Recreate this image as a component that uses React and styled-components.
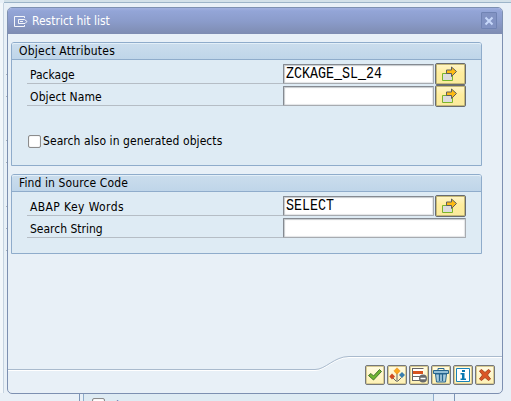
import React from "react";
import styled, { createGlobalStyle } from "styled-components";

const Global = createGlobalStyle`
  *, *::before, *::after { box-sizing: border-box; }
  body { margin: 0; overflow: hidden; }
`;

const Screen = styled.div`
  position: relative;
  width: 511px;
  height: 401px;
  overflow: hidden;
  background: #e8f0f7;
  font: 12px/16px "DejaVu Sans Condensed", "DejaVu Sans", sans-serif;
  font-stretch: condensed;
  color: #000;
`;

const Backdrop = styled.div`
  height: 100%;
  display: grid;
  grid-template: 3px 1fr 8px / 100%;
`;

const BackdropBar = styled.div`
  background: #d3e1e9;
  border-bottom: 1px solid #9cb4c8;
  margin-left: 4px;
`;

const Rail = styled.div`
  width: 7px;
  border-left: 3px solid #f2f7fb;
  box-shadow: inset 1px 0 #c5d3e0;
  padding: 71px 0 0 3px;
`;

const Tick = styled.div`
  width: 2px;
  height: 1px;
  margin-bottom: ${(p) => p.$gap}px;
  background: #a9b3bc;
`;

const BackdropPanes = styled.div`
  display: grid;
  grid-template-columns: 80px 3px 351px 21px 1fr;
`;

const Pane = styled.div`
  background: ${(p) => (p.$inner ? "#deebf3" : "#e8f0f7")};
  border-right: 1px solid ${(p) => p.$edge || "transparent"};
  border-left: 1px solid ${(p) => p.$start || "transparent"};
  display: flex;
  gap: 1px;
  padding: 5px 0 0 8px;
  overflow: hidden;
  color: #5c6fa7;
`;

const Dialog = styled.section`
  position: absolute;
  left: 7px;
  top: 7px;
  width: 496px;
  height: 387px;
  display: flex;
  flex-direction: column;
  border: 1px solid #7d90b1;
  border-radius: 5px;
  background: #e8f0f7;
  overflow: hidden;
`;

const TitleBar = styled.header`
  flex: 0 0 26px;
  display: flex;
  align-items: center;
  padding: 0 5px 0 5px;
  background: linear-gradient(#a0b0df, #93a5d7 3px, #8b9ccb 50%, #7e8cb1);
  color: #fff;
`;

const Title = styled.h1`
  flex: 1;
  margin: 0 0 0 4px;
  font: inherit;
  font-size: 12px;
`;

const CloseButton = styled.button`
  display: flex;
  width: 16px;
  height: 17px;
  margin-bottom: 1px;
  padding: 0;
  align-items: center;
  justify-content: center;
  border: 1px solid #7083b3;
  border-radius: 1px;
  background: #8293c3;
`;

const Group = styled.section`
  flex: none;
  width: 471px;
  height: ${(p) => p.$height}px;
  margin: 8px 0 0 3px;
  border: 1px solid #8faccb;
  border-radius: 3px 3px 0 0;
  background: #deebf4;
`;

const GroupTitle = styled.h2`
  height: 17px;
  margin: 0;
  padding-left: 7px;
  border-bottom: 1px solid #8faccb;
  border-radius: 2px 2px 0 0;
  box-shadow: inset 0 1px #e3eff8;
  background: linear-gradient(#cbdded, #bfd5e9);
  font: inherit;
  line-height: 16px;
  letter-spacing: ${(p) => p.$spacing || 0}px;
`;

const Rows = styled.div`
  padding: 3px 15px 0;
`;

const Row = styled.div`
  display: grid;
  grid-template-columns: 256px 151px 32px;
  height: 22px;
`;

const Label = styled.label`
  height: 21px;
  padding: 4px 0 0 3px;
  border-bottom: 1px solid #b5bdc5;
  line-height: 16px;
  white-space: nowrap;
  letter-spacing: ${(p) => p.$spacing || 0}px;
`;

const Field = styled.div`
  grid-column: ${(p) => (p.$wide ? "2 / 4" : "2")};
  height: 20px;
  margin-top: 1px;
  padding: 2px 2px 0;
  border: 1px solid;
  border-color: #858a91 #a7abb0 #a7abb0 #858a91;
  border-radius: 1px;
  background: #fff;
  box-shadow: inset 1px 1px 1px #c5c9cc, inset -1px -1px 1px #e3e5e7;
`;

const FieldText = styled.span`
  display: block;
  font: 13.33px/16px "Liberation Mono", monospace;
  transform: scaleY(1.22);
  transform-origin: 0 12px;
`;

const PickButton = styled.button`
  width: 31px;
  height: 22px;
  margin-left: 1px;
  padding: 1px 5px;
  display: grid;
  place-items: start;
  place-content: start;
  border: 1px solid #686b70;
  border-radius: 2px;
  background: linear-gradient(#fff5c9, #ffed9c 45%, #faea9e);
  box-shadow: inset 0 0 0 1px #c5b875;
`;

const CheckRow = styled.label`
  display: flex;
  align-items: center;
  height: 16px;
  margin-top: 26px;
  padding-left: 1px;
  letter-spacing: 0.07px;
`;

const CheckBox = styled.span`
  flex: none;
  width: 13px;
  height: 13px;
  margin-right: 2px;
  border: 1px solid #8c8c8c;
  border-radius: 2px;
  background: #fff;
  box-shadow: inset 0 0 1px #aaa;
`;

const Footer = styled.footer`
  position: relative;
  display: flex;
  justify-content: flex-end;
  gap: 2px;
  margin-top: auto;
  padding: 9px 7px 8px 0;
`;

const FooterEdge = styled.svg`
  position: absolute;
  left: 0;
  top: 0;
  pointer-events: none;
`;

const ToolButton = styled.button`
  width: 20px;
  height: 20px;
  padding: 0;
  display: grid;
  place-items: center;
  border: 1px solid #74777b;
  border-radius: 2px;
  background: linear-gradient(#fffbe2, #fdf0b4);
  box-shadow: inset 0 0 0 1px #d7ca91;
`;

const Icon = ({ size = 16, children }) => (
  <svg width={size} height={size} viewBox={`0 0 ${size} ${size}`} fill="none">
    {children}
  </svg>
);

const ExitIcon = () => (
  <svg width="15" height="13" viewBox="0 0 15 13" fill="none" stroke="#f4f6fb">
    <path d="M11.500 3V1.500H1.500V11.500H11.500V10M5.500 4.500H11.500L14 6.500L12 8.500H5.500V4.500M7 6.500H10" />
  </svg>
);

const PickIcon = () => (
  <Icon>
    <path d="M1.500 8.500H11.500V15.500H1.500Z" fill="#dcdcdc" stroke="#7ab52a" />
    <path d="M5.500 5H10.500V2L15.500 6.500L10.500 11.500V8.500H5.500Z" fill="#fdbb13" stroke="#5d5e60" />
  </Icon>
);

const CheckIcon = () => (
  <Icon>
    <path d="M1.500 8.500L4 6.500L6.500 9L12.500 2.500L14.500 4.500L6.500 13Z" fill="#70b52f" stroke="#43742c" />
  </Icon>
);

const SpreadIcon = () => (
  <Icon>
    <path d="M8 6V14.500M3.500 10.500L7.500 14.500M12.500 10.500L8.500 14.500" stroke="#666" />
    <path d="M8 .800L11.200 4L8 7.200L4.800 4Z" fill="#f9a71b" stroke="#ed8d23" strokeWidth=".6" />
    <path d="M3 6.500L6 9.500L3 12.500L.300 9.500Z" fill="#cf4a20" />
    <path d="M13 5L16 8L13 11L10 8Z" fill="#387eae" />
  </Icon>
);

const DeleteRowIcon = () => (
  <Icon>
    <path d="M1.500 1.500H12.500V13.500H1.500Z" fill="#fff" />
    <path d="M2 4H12V7H2Z" fill="#d6531f" />
    <path d="M1 1.500H12.500M1.500 2V14M1 9.500H11M1 13.500H9" stroke="#656565" />
    <circle cx="12" cy="11.500" r="4" fill="#686a6c" />
    <path d="M9.500 11.500H14.500" stroke="#fff" strokeWidth="1.500" />
  </Icon>
);

const TrashIcon = () => (
  <Icon>
    <path d="M5 3V1.500H11V3" stroke="#27658d" />
    <path d="M.500 3.500H15.500V6.500H.500Z" fill="#92bed6" stroke="#27658d" />
    <path d="M2.500 7H13.500L12.500 15H3.500Z" fill="#a9cde0" stroke="#27658d" />
    <path d="M6.500 7V14M9.500 7V14" stroke="#27658d" strokeWidth="1.300" />
  </Icon>
);

const InfoIcon = () => (
  <Icon>
    <path d="M1.500 1.500H14.500V14.500H1.500Z" fill="#fff" stroke="#1782b9" />
    <path d="M7 3H10V5H7ZM5.500 6H9.500V11.500H11V13H5.500V11.500H7V7.500H5.500Z" fill="#0878b2" />
  </Icon>
);

const CancelIcon = () => (
  <Icon>
    <path d="M2.500 4L4.500 2.500L8 5.500L11.500 2.500L13.500 4L10.500 8L13.500 12L11.500 13.500L8 10.500L4.500 13.500L2.500 12L5.500 8Z" fill="#db5625" stroke="#a84623" />
  </Icon>
);

const tools = [
  ["Continue", CheckIcon],
  ["Multiple selection", SpreadIcon],
  ["Delete row", DeleteRowIcon],
  ["Clear", TrashIcon],
  ["Information", InfoIcon],
  ["Cancel", CancelIcon],
];

function FieldRow({ label, value, pick, spacing }) {
  return (
    <Row>
      <Label $spacing={spacing}>{label}</Label>
      <Field $wide={!pick}>
        <FieldText>{value}</FieldText>
      </Field>
      {pick && (
        <PickButton aria-label={`Select ${label}`}>
          <PickIcon />
        </PickButton>
      )}
    </Row>
  );
}

export default function App() {
  return (
    <Screen>
      <Global />
      <Backdrop>
        <BackdropBar />
        <Rail>
          {[21, 43, 21, 43, 21, 21, 0].map((gap, i) => (
            <Tick key={i} $gap={gap} />
          ))}
        </Rail>
        <BackdropPanes>
          <Pane $edge="#7d94b6" />
          <Pane />
          <Pane $inner $start="#8faccb" $edge="#8faccb">
            <CheckBox />
            <span>Hi</span>
          </Pane>
          <Pane $edge="#7d94b6" />
          <Pane />
        </BackdropPanes>
      </Backdrop>

      <Dialog>
        <TitleBar>
          <ExitIcon />
          <Title>Restrict hit list</Title>
          <CloseButton aria-label="Close">
            <svg width="10" height="10" viewBox="0 0 10 10" stroke="#c7d8fa" strokeWidth="2">
              <path d="M1.500 1.500L8.500 8.500M8.500 1.500L1.500 8.500" />
            </svg>
          </CloseButton>
        </TitleBar>

        <Group $height={124}>
          <GroupTitle $spacing={0.25}>Object Attributes</GroupTitle>
          <Rows>
            <FieldRow label="Package" value="ZCKAGE_SL_24" pick />
            <FieldRow label="Object Name" value="" pick spacing={0.13} />
            <CheckRow>
              <CheckBox />
              Search also in generated objects
            </CheckRow>
          </Rows>
        </Group>

        <Group $height={80}>
          <GroupTitle $spacing={0.11}>Find in Source Code</GroupTitle>
          <Rows>
            <FieldRow label="ABAP Key Words" value="SELECT" pick spacing={0.4} />
            <FieldRow label="Search String" value="" />
          </Rows>
        </Group>

        <Footer>
          <FooterEdge width="494" height="20" viewBox="0 0 494 20" fill="none">
            <path d="M0 14.500H307C318 14.500 326 1.500 341 1.500H494" stroke="#fff" />
            <path d="M0 13.500H307C318 13.500 326 .500 341 .500H494" stroke="#a9bacd" />
          </FooterEdge>
          {tools.map(([name, Glyph]) => (
            <ToolButton key={name} aria-label={name}>
              <Glyph />
            </ToolButton>
          ))}
        </Footer>
      </Dialog>
    </Screen>
  );
}
